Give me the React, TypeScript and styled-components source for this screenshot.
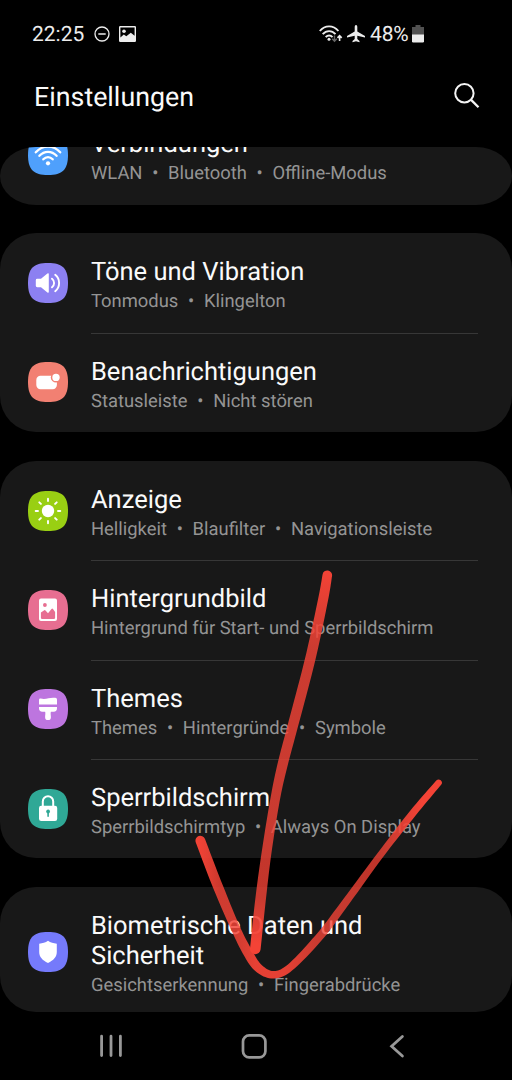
import React from "react";
import styled, { createGlobalStyle } from "styled-components";

const GlobalStyle = createGlobalStyle`
  *, *::before, *::after { box-sizing: border-box; }
  html, body { margin: 0; background: #000; }
  body { font-family: Roboto, "Noto Sans", sans-serif; color: #fafafa; text-rendering: geometricPrecision; }
`;

const Screen = styled.div`
  position: relative;
  display: flex;
  flex-direction: column;
  width: 512px;
  height: 1080px;
  overflow: hidden;
  background: #000;
`;

const StatusBar = styled.div`
  display: flex;
  align-items: center;
  height: 68px;
  padding: 0 88.5px 0 32px;
  font-size: 21px;
  line-height: 26px;
  color: #ececec;
  svg { display: block; flex: none; }
`;

const StatusGroup = styled.div<{ $gap: number }>`
  display: flex;
  align-items: center;
  gap: ${(p) => p.$gap}px;
  &:last-child { margin-left: auto; }
`;

const Clock = styled.span`
  padding-top: 1px;
`;

const Battery = styled.span`
  display: flex;
  align-items: center;
  gap: 2px;
`;

const Percent = styled.span`
  margin: 0 1px 0 3px;
  padding-top: 1px;
  letter-spacing: -0.2px;
`;

const Header = styled.header`
  display: flex;
  align-items: center;
  justify-content: space-between;
  height: 56px;
  margin-bottom: 22.5px;
  padding: 0 32px 0 34px;
  flex: none;
`;

const PageTitle = styled.h1`
  margin: 0;
  padding-top: 1.6px;
  font-size: 26.8px;
  font-weight: 400;
  line-height: 32px;
`;

const List = styled.main`
  display: flex;
  flex-direction: column;
  gap: 28.8px;
  height: 865.5px;
  flex: none;
`;

const Card = styled.section<{ $height: number; $cut?: boolean }>`
  display: flex;
  flex-direction: column;
  flex: none;
  justify-content: ${(p) => (p.$cut ? "flex-end" : "flex-start")};
  height: ${(p) => p.$height}px;
  overflow: hidden;
  background: #181818;
  border-radius: ${(p) => (p.$cut ? "36px / 29px" : "36px")};
`;

const Row = styled.div<{ $tall?: boolean }>`
  display: flex;
  align-items: center;
  flex: none;
  height: ${(p) => (p.$tall ? 129.2 : 99.45)}px;
  padding-left: 28.4px;
  & > svg { flex: none; }
`;

const RowBody = styled.div<{ $divided?: boolean }>`
  display: flex;
  flex-direction: column;
  align-self: stretch;
  width: 387px;
  margin-left: 22.6px;
  padding-top: 23.2px;
  border-top: 1.4px solid ${(p) => (p.$divided ? "#373737" : "transparent")};
`;

const RowTitle = styled.div`
  font-size: 25.5px;
  line-height: 30px;
  white-space: pre-line;
`;

const RowDetail = styled.div`
  margin-top: 3.9px;
  font-size: 18.4px;
  line-height: 22px;
  color: #949494;
  white-space: nowrap;
`;

const Dot = styled.span`
  display: inline-block;
  width: 25.6px;
  text-align: center;
`;

const NavBar = styled.nav`
  display: flex;
  align-items: center;
  justify-content: center;
  gap: 115px;
  height: 68px;
  padding-right: 4px;
  flex: none;
`;

const Scribble = styled.svg`
  position: absolute;
  inset: 0;
  pointer-events: none;
`;

function Tile({ color, children }: { color: string; children: React.ReactNode }) {
  return (
    <svg width="40" height="40" viewBox="0 0 40 40" fill="none">
      <path d="M20 0C34.5 0 40 5.5 40 20S34.5 40 20 40 0 34.5 0 20 5.5 0 20 0Z" fill={color} />
      {children}
    </svg>
  );
}

const WifiTile = (
  <Tile color="#4fa0fc">
    <g stroke="#fff" strokeWidth="2.3" strokeLinecap="round">
      <path d="M7.8 17.3C14.5 9.8 25.5 9.8 32.2 17.3" />
      <path d="M11.4 20.8C16.3 15.6 23.7 15.6 28.6 20.8" />
      <path d="M15.3 24.3C18.1 21.4 21.9 21.4 24.7 24.3" />
    </g>
    <circle cx="20" cy="28.3" r="2.1" fill="#fff" />
  </Tile>
);

const SoundTile = (
  <Tile color="#8c80f1">
    <path d="M9.2 15.8H13L19.4 10.6Q20.8 9.8 20.8 11.2V28.8Q20.8 30.2 19.4 29.4L13 24.2H9.2Q7.8 24.2 7.8 22.8V17.2Q7.8 15.8 9.2 15.8Z" fill="#fff" />
    <path d="M24 15.7C26.8 18 26.8 22 24 24.3M27.2 11.8C32.4 16 32.4 24 27.2 28.2" stroke="#fff" strokeWidth="1.9" strokeLinecap="round" />
  </Tile>
);

const NoticeTile = (
  <Tile color="#f28072">
    <rect x="8.3" y="13.7" width="20.6" height="13.6" rx="4.2" fill="#fff" />
    <circle cx="28" cy="15.4" r="5.2" fill="#f28072" />
    <circle cx="28" cy="15.4" r="3.7" fill="#fff" />
  </Tile>
);

const SunTile = (
  <Tile color="#99cf13">
    <circle cx="20" cy="20" r="6.2" fill="#fff" />
    <path d="M20 7.7V10M20 30V32.3M7.7 20H10M30 20H32.3M11.3 11.3L12.9 12.9M27.1 27.1L28.7 28.7M28.7 11.3L27.1 12.9M12.9 27.1L11.3 28.7" stroke="#fff" strokeWidth="1.9" strokeLinecap="round" />
  </Tile>
);

const PictureTile = (
  <Tile color="#e76e91">
    <path fillRule="evenodd" fill="#fff" d="M13 8.6H27Q29 8.6 29 10.6V29Q29 31 27 31H13Q11 31 11 29V10.6Q11 8.6 13 8.6ZM12.9 22.4V27.7Q12.9 29 14.2 29H25.8Q27.1 29 27.1 27.7V22L25 18.9Q24.3 18 23.5 18.9L20 23.2L17.5 20.4Q16.7 19.6 15.9 20.4Z" />
    <circle cx="16.9" cy="15" r="1.9" fill="#e76e91" />
  </Tile>
);

const BrushTile = (
  <Tile color="#bd75df">
    <path d="M11 11Q11 9.3 12.7 9.6C18 10.6 21 8.7 25 8.7H27.3Q29 8.7 29 10.4V15.6H11Z" fill="#fff" />
    <path d="M11 17.9H29V19.3Q29 22.7 25.6 22.7H22.9C22.3 24 22.9 26 22.9 28.2A2.9 2.9 0 0 1 17.1 28.2C17.1 26 17.7 24 17.1 22.7H14.4Q11 22.7 11 19.3Z" fill="#fff" />
  </Tile>
);

const LockTile = (
  <Tile color="#2fa896">
    <path d="M14.8 18V12.4A5.2 5.2 0 0 1 25.2 12.4V18" stroke="#fff" strokeWidth="2" />
    <rect x="11" y="16.8" width="18.2" height="15.2" rx="2.2" fill="#fff" />
    <circle cx="20.1" cy="22.5" r="1.9" fill="#2fa896" />
    <path d="M20.1 23V27.2" stroke="#2fa896" strokeWidth="1.6" strokeLinecap="round" />
  </Tile>
);

const ShieldTile = (
  <Tile color="#757afb">
    <path d="M20 8.8C22.5 10.8 25.5 11.4 28.8 11.7V20C28.8 25 25.5 28.3 20 31C14.5 28.3 11.2 25 11.2 20V11.7C14.5 11.4 17.5 10.8 20 8.8Z" fill="#fff" />
  </Tile>
);

interface Entry {
  icon: React.ReactNode;
  title: string;
  details: string[];
  tall?: boolean;
}

interface Group {
  height: number;
  cut?: boolean;
  entries: Entry[];
}

const groups: Group[] = [
  { height: 58, cut: true, entries: [{ icon: WifiTile, title: "Verbindungen", details: ["WLAN", "Bluetooth", "Offline-Modus"] }] },
  {
    height: 198.7,
    entries: [
      { icon: SoundTile, title: "Töne und Vibration", details: ["Tonmodus", "Klingelton"] },
      { icon: NoticeTile, title: "Benachrichtigungen", details: ["Statusleiste", "Nicht stören"] },
    ],
  },
  {
    height: 397.6,
    entries: [
      { icon: SunTile, title: "Anzeige", details: ["Helligkeit", "Blaufilter", "Navigationsleiste"] },
      { icon: PictureTile, title: "Hintergrundbild", details: ["Hintergrund für Start- und Sperrbildschirm"] },
      { icon: BrushTile, title: "Themes", details: ["Themes", "Hintergründe", "Symbole"] },
      { icon: LockTile, title: "Sperrbildschirm", details: ["Sperrbildschirmtyp", "Always On Display"] },
    ],
  },
  {
    height: 125,
    entries: [{ icon: ShieldTile, title: "Biometrische Daten und\nSicherheit", details: ["Gesichtserkennung", "Fingerabdrücke"], tall: true }],
  },
];

type Knot = [x: number, y: number, radius: number];

/** Outline of a pen stroke through the knots, with a radius that varies along the way. */
function penStroke(knots: Knot[]): string {
  const pts: Knot[] = [];
  for (let i = 0; i < knots.length - 1; i++) {
    const a = knots[Math.max(i - 1, 0)];
    const b = knots[i];
    const c = knots[i + 1];
    const d = knots[Math.min(i + 2, knots.length - 1)];
    for (let s = 0; s < 10; s++) {
      const t = s / 10;
      const at = (k: 0 | 1 | 2) =>
        0.5 * (2 * b[k] + (c[k] - a[k]) * t + (2 * a[k] - 5 * b[k] + 4 * c[k] - d[k]) * t * t + (3 * b[k] - a[k] - 3 * c[k] + d[k]) * t * t * t);
      pts.push([at(0), at(1), at(2)]);
    }
  }
  pts.push(knots[knots.length - 1]);
  const side = (sign: number) =>
    pts.map(([x, y, r], i) => {
      const p = pts[Math.max(i - 1, 0)];
      const n = pts[Math.min(i + 1, pts.length - 1)];
      const len = Math.hypot(n[0] - p[0], n[1] - p[1]);
      return `${(x - (sign * r * (n[1] - p[1])) / len).toFixed(2)} ${(y + (sign * r * (n[0] - p[0])) / len).toFixed(2)}`;
    });
  const left = side(-1);
  const right = side(1).reverse();
  const endR = knots[knots.length - 1][2];
  const startR = knots[0][2];
  return `M${left.join("L")}A${endR} ${endR} 0 0 1 ${right[0]}L${right.join("L")}A${startR} ${startR} 0 0 1 ${left[0]}Z`;
}

const shaft = penStroke([
  [327.3, 575.2, 4.8], [323, 600, 5], [310, 660, 5.2], [292.5, 727, 5.2], [282.5, 765, 5.1],
  [275, 800, 4.8], [266.5, 853, 4.9], [260.5, 900, 5.3], [255.3, 949, 5.3],
]);

const head = penStroke([
  [200.3, 840.5, 4.9], [216.5, 883, 5], [235, 927, 4.6], [248, 953, 4.8], [258.5, 968, 4.4], [273, 974.8, 3.7],
  [290, 967.5, 3.7], [318, 938.5, 4], [340, 910, 3.8], [380, 855.5, 3.4], [413, 813, 3.6], [438.7, 782.7, 3.2],
]);

export default function App() {
  return (
    <Screen>
      <GlobalStyle />
      <StatusBar>
        <StatusGroup $gap={9.5}>
          <Clock>22:25</Clock>
          <svg width="16" height="16" viewBox="0 0 16 16" fill="none" stroke="#ececec">
            <circle cx="8" cy="8" r="7" strokeWidth="1.3" />
            <path d="M4.3 8H11.7" strokeWidth="1.5" />
          </svg>
          <svg width="17" height="16" viewBox="0 0 17 16">
            <path fillRule="evenodd" fill="#ececec" d="M1.2 0H15.8Q17 0 17 1.2V14.8Q17 16 15.8 16H1.2Q0 16 0 14.8V1.2Q0 0 1.2 0ZM1.4 1.4V11.4L4.8 8.6L7.3 10.3L11.8 6.8L15.6 9.8V1.4Z" />
            <circle cx="5" cy="5.2" r="1.8" fill="#ececec" />
          </svg>
        </StatusGroup>
        <StatusGroup $gap={4}>
          <svg width="24" height="19" viewBox="0 0 24 19" fill="none">
            <g stroke="#ececec" strokeWidth="1.9">
              <path d="M.8 6C6-.2 14.2-.2 19.4 6" />
              <path d="M3.7 9.2C7.3 5.1 12.9 5.1 16.5 9.2" />
              <path d="M6.7 12.2C8.8 9.9 11.4 9.9 13.5 12.2" />
            </g>
            <circle cx="10" cy="14.2" r="1.5" fill="#ececec" />
            <path d="M15.5 10.5V15.5M13.2 13.8L15.5 16.2L17.8 13.8" stroke="#666" strokeWidth="1.4" />
            <path d="M20.6 16V11M18.5 12.9L20.6 10.7L22.7 12.9" stroke="#ececec" strokeWidth="1.6" />
          </svg>
          <Battery>
            <svg width="18" height="18" viewBox="0 0 18 18">
              <path transform="translate(-2 0)" fill="#ececec" d="M9.7 1.7Q9.7 0 11 0T12.3 1.7V6.5L20 10.9V12.5L12.3 10.8V14L14.5 16V17.2L11 16.2L7.5 17.2V16L9.7 14V10.8L2 12.5V10.9L9.7 6.5Z" />
            </svg>
            <Percent>48%</Percent>
            <svg width="12" height="18" viewBox="0 0 12 18">
              <path d="M3.5 0H8.5V2H12V10H0V2H3.5Z" fill="#515151" />
              <path d="M0 9.5H12V16.3Q12 17.5 10.8 17.5H1.2Q0 17.5 0 16.3Z" fill="#ececec" />
            </svg>
          </Battery>
        </StatusGroup>
      </StatusBar>
      <Header>
        <PageTitle>Einstellungen</PageTitle>
        <svg width="26" height="26" viewBox="0 0 26 26" fill="none" stroke="#f4f4f4" strokeWidth="2">
          <circle cx="10.4" cy="10.2" r="9.2" />
          <path d="M17.1 16.9L24.5 24.2" strokeWidth="2.3" />
        </svg>
      </Header>
      <List>
        {groups.map((group) => (
          <Card key={group.entries[0].title} $height={group.height} $cut={group.cut}>
            {group.entries.map((entry, i) => (
              <Row key={entry.title} $tall={entry.tall}>
                {entry.icon}
                <RowBody $divided={i > 0}>
                  <RowTitle>{entry.title}</RowTitle>
                  <RowDetail>
                    {entry.details.map((detail, n) => (
                      <React.Fragment key={detail}>
                        {n > 0 && <Dot>•</Dot>}
                        {detail}
                      </React.Fragment>
                    ))}
                  </RowDetail>
                </RowBody>
              </Row>
            ))}
          </Card>
        ))}
      </List>
      <NavBar>
        <svg width="28" height="28" viewBox="0 0 28 28" stroke="#989898" strokeWidth="2.8" strokeLinecap="round">
          <path d="M4.6 4.2V23.6M14 4.2V23.6M23.4 4.2V23.6" />
        </svg>
        <svg width="28" height="28" viewBox="0 0 28 28" fill="none" stroke="#989898" strokeWidth="2.7">
          <rect x="3" y="3.4" width="22.4" height="22" rx="6.2" />
        </svg>
        <svg width="28" height="28" viewBox="0 0 28 28" fill="none" stroke="#989898" strokeWidth="2.8" strokeLinecap="round">
          <path d="M19.4 4.5L8.6 14.3L19.4 24" />
        </svg>
      </NavBar>
      <Scribble width="512" height="1080" viewBox="0 0 512 1080">
        <defs>
          <linearGradient id="shaftInk" gradientUnits="userSpaceOnUse" x1="0" y1="570" x2="0" y2="955">
            <stop offset="0" stopColor="#f44336" />
            <stop offset="0.06" stopColor="#f44336" stopOpacity="0.94" />
            <stop offset="0.2" stopColor="#f44336" stopOpacity="0.82" />
            <stop offset="0.85" stopColor="#f44336" stopOpacity="0.8" />
            <stop offset="0.97" stopColor="#f44336" />
          </linearGradient>
          <linearGradient id="headInk" gradientUnits="userSpaceOnUse" x1="196" y1="0" x2="442" y2="0">
            <stop offset="0" stopColor="#f44336" />
            <stop offset="0.04" stopColor="#f44336" stopOpacity="0.94" />
            <stop offset="0.1" stopColor="#f44336" stopOpacity="0.83" />
            <stop offset="0.16" stopColor="#f44336" stopOpacity="0.83" />
            <stop offset="0.24" stopColor="#f44336" stopOpacity="0.94" />
            <stop offset="0.36" stopColor="#f44336" stopOpacity="0.93" />
            <stop offset="0.5" stopColor="#f44336" stopOpacity="0.8" />
            <stop offset="0.75" stopColor="#f44336" stopOpacity="0.78" />
            <stop offset="0.92" stopColor="#f44336" />
          </linearGradient>
        </defs>
        <path d={shaft} fill="url(#shaftInk)" />
        <path d={head} fill="url(#headInk)" />
      </Scribble>
    </Screen>
  );
}
